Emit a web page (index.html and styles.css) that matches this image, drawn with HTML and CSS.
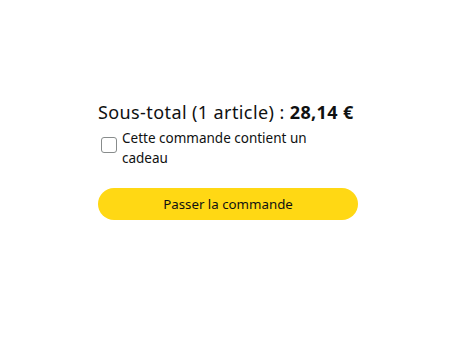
FILE: index.html
```html
<!DOCTYPE html>
<html lang="fr">
<head>
<meta charset="utf-8">
<link rel="stylesheet" href="styles.css">
</head>
<body>
<div class="box">
  <div class="subtotal">Sous-total (1 article) : <b>28,14&nbsp;€</b></div>
  <label class="gift">
    <span class="check"></span>
    <span class="gift-text">Cette commande contient un cadeau</span>
  </label>
  <button class="buy">Passer la commande</button>
</div>
</body>
</html>
```

FILE: styles.css
```css
html, body { margin: 0; padding: 0; background: #fff; }
body { font-family: "Noto Sans", "DejaVu Sans", sans-serif; color: #0f1111; }
.box { width: 260px; margin: 100px 0 0 98px; display: flex; flex-direction: column; }
.subtotal { font-size: 18px; line-height: 24px; white-space: nowrap; letter-spacing: 0.4px; }
.subtotal b { font-weight: 700; }
.gift { display: flex; align-items: flex-start; margin-top: 4px; gap: 5px; }
.check { flex: none; width: 14px; height: 14px; border: 1px solid #888c8c; border-radius: 3px; margin: 9px 0 0 3px; background: #fff; }
.gift-text { font-size: 13.5px; line-height: 20px; width: 200px; }
.buy { margin-top: 20px; height: 32px; width: 260px; border: 0; border-radius: 16px; background: #ffd814; font-family: inherit; font-size: 13.3px; color: #0f1111; padding: 0; }
```
